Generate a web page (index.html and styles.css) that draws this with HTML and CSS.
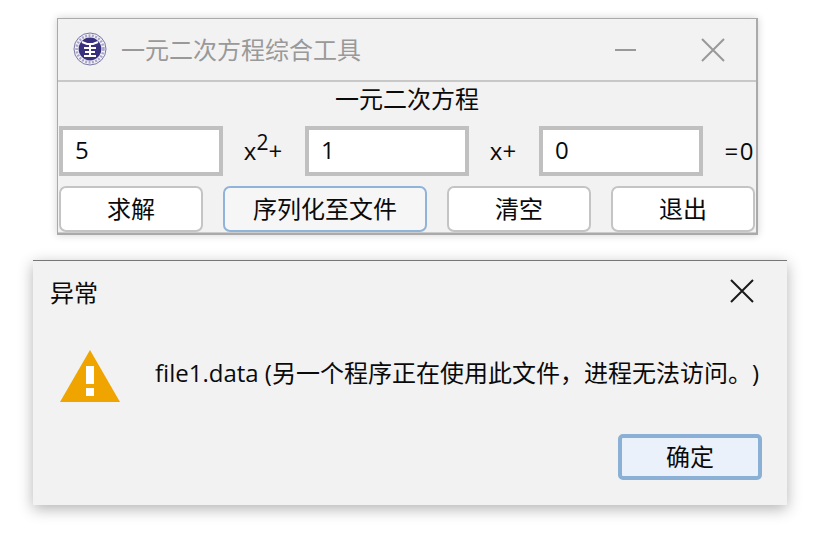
FILE: index.html
```html
<!DOCTYPE html>
<html>
  <head>
    <meta charset="utf-8">
    <link rel="stylesheet" href="styles.css">
  </head>
  <body>
    <div class="window main-window">
      <div class="title-bar">
        <svg class="logo" width="34" height="34" viewBox="0 0 34 34">
          <circle cx="17" cy="17" r="16" fill="#f4f3f8" stroke="#7a76a6" stroke-width="1"/>
          <circle cx="17" cy="17" r="13.4" fill="none" stroke="#a9a6c8" stroke-width="2.6" stroke-dasharray="2 1.4"/>
          <circle cx="17" cy="17" r="11.4" fill="#38307c"/>
          <path d="M9 10l5 2h6l5-2M17 11v13M11 16h12M12 20h10M11 24h12" stroke="#fff" stroke-width="2" fill="none"/>
        </svg>
        <span class="title-text">一元二次方程综合工具</span>
        <svg class="min-icon" width="21" height="2" viewBox="0 0 21 2">
          <path d="M0 1h21" stroke="#999" stroke-width="2"/>
        </svg>
        <svg class="close-icon" width="24" height="24" viewBox="0 0 24 24">
          <path d="M1 1l22 22M23 1L1 23" stroke="#999" stroke-width="2"/>
        </svg>
      </div>
      <div class="content">
        <div class="heading">一元二次方程</div>
        <div class="equation">
          <div class="field">5</div>
          <div class="term term-a">x<sup>2</sup>+</div>
          <div class="field">1</div>
          <div class="term term-b">x+</div>
          <div class="field">0</div>
          <div class="term term-c">=0</div>
        </div>
        <div class="actions">
          <div class="btn btn-small">求解</div>
          <div class="btn btn-wide focused">序列化至文件</div>
          <div class="btn btn-small">清空</div>
          <div class="btn btn-small">退出</div>
        </div>
      </div>
    </div>

    <div class="window dialog">
      <div class="dialog-title">
        <span>异常</span>
        <svg width="24" height="24" viewBox="0 0 24 24">
          <path d="M1 1l22 22M23 1L1 23" stroke="#1a1a1a" stroke-width="2"/>
        </svg>
      </div>
      <div class="dialog-body">
        <svg class="warn" width="60" height="52" viewBox="0 0 60 52">
          <path d="M30 0L60 52H0z" fill="#f0a400"/>
          <rect x="26" y="16" width="8" height="18" fill="#fff"/>
          <rect x="26" y="38" width="8" height="8" fill="#fff"/>
        </svg>
        <div class="message">file1.data (另一个程序正在使用此文件，进程无法访问。)</div>
      </div>
      <div class="dialog-footer">
        <div class="ok-btn">确定</div>
      </div>
    </div>
  </body>
</html>
```

FILE: styles.css
```css
html,
body {
  margin: 0;
  height: 100%;
  background-color: white;
  overflow: hidden;
}

body {
  font-family: "Open Sans", "Noto Sans CJK SC", sans-serif;
  font-size: 24px;
  color: #0a0a0a;
  text-spacing-trim: space-all;
}

.window {
  position: absolute;
  box-sizing: border-box;
  background-color: #f2f2f2;
}

.main-window {
  left: 57px;
  top: 18px;
  width: 701px;
  height: 217px;
  border: 1px solid #aaa;
  border-right-width: 2px;
  border-bottom-width: 2px;
  box-shadow: 0 0 8px rgba(0, 0, 0, 0.18);
}

.title-bar {
  display: flex;
  align-items: center;
  height: 63px;
  padding-left: 15px;
  padding-bottom: 2px;
  box-sizing: border-box;
  border-bottom: 2px solid #c8c8c8;
}

.title-text {
  margin-left: 14px;
  color: #999;
}

.min-icon {
  margin-left: 254px;
  margin-top: 2px;
}

.close-icon {
  margin-left: 65px;
  margin-top: 2px;
}

.content {
  padding: 0 1px;
  border-bottom: 1px solid #ccc;
}

.heading {
  height: 44px;
  line-height: 34px;
  text-align: center;
}

.equation {
  display: flex;
  align-items: center;
  height: 50px;
}

.field {
  box-sizing: border-box;
  width: 164px;
  height: 50px;
  padding-left: 12px;
  border: 4px solid #c0c0c0;
  background-color: white;
  line-height: 40px;
}

.term {
  box-sizing: border-box;
  text-align: center;
  line-height: 44px;
  padding-right: 2px;
}

.term-a {
  width: 82px;
}

.term-b {
  width: 70px;
}

.term-c {
  width: 52px;
  padding-right: 0;
  text-align: right;
  letter-spacing: 1.5px;
}

sup {
  font-size: 21px;
  line-height: 0;
  vertical-align: 10px;
}

.actions {
  display: flex;
  gap: 20px;
  margin-top: 10px;
}

.btn {
  box-sizing: border-box;
  height: 46px;
  border: 2px solid #c4c4c4;
  border-radius: 7px;
  background-color: white;
  text-align: center;
  line-height: 42px;
}

.btn-small {
  width: 144px;
}

.btn-wide {
  width: 204px;
}

.btn.focused {
  border-color: #8fb3d9;
  background-color: #f6f6f6;
}

.dialog {
  left: 33px;
  top: 260px;
  width: 754px;
  height: 245px;
  border-top: 1px solid #777;
  box-shadow: 0 4px 14px rgba(0, 0, 0, 0.3);
}

.dialog-title {
  display: flex;
  justify-content: space-between;
  align-items: center;
  height: 60px;
  padding: 0 33px 0 17px;
}

.dialog-body {
  display: flex;
  align-items: center;
  height: 113px;
  padding-left: 27px;
}

.message {
  margin-left: 35px;
  margin-bottom: 12px;
  white-space: nowrap;
}

.warn {
  flex-shrink: 0;
  margin-bottom: 3px;
}

.dialog-footer {
  display: flex;
  justify-content: flex-end;
  padding-right: 25px;
}

.ok-btn {
  box-sizing: border-box;
  width: 144px;
  height: 46px;
  border: 4px solid #8bb0d6;
  border-radius: 5px;
  background-color: #eaf1fb;
  text-align: center;
  line-height: 38px;
}
```
